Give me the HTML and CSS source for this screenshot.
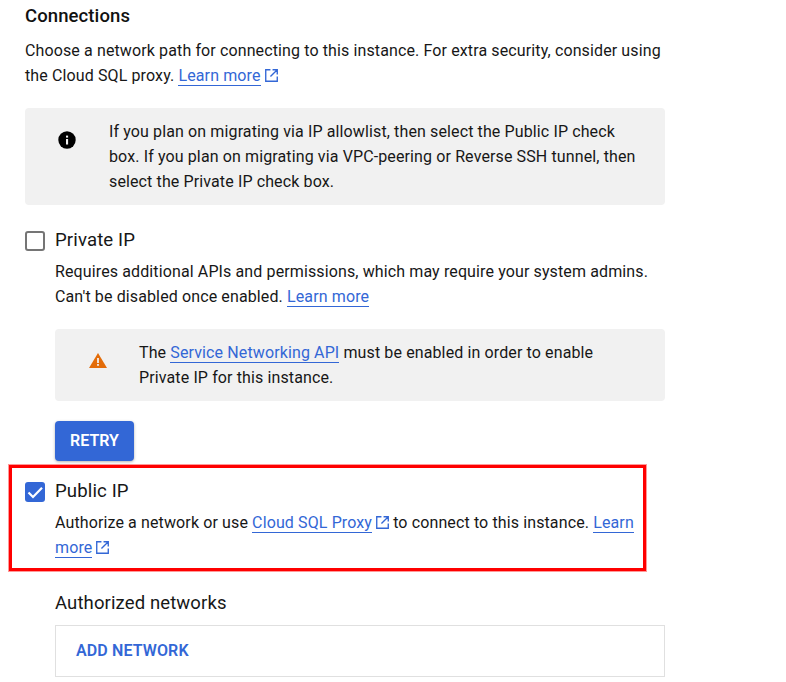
FILE: index.html
```html
<!DOCTYPE html>
<html lang="en">
<head>
    <meta charset="UTF-8">
    <meta name="viewport" content="width=device-width, initial-scale=1.0">
    <title>Connections</title>
    <link rel="stylesheet" href="styles.css">
</head>
<body>
    <div class="container">
        <h2 class="heading">Connections</h2>
        <p class="intro">Choose a network path for connecting to this instance. For extra security, consider using the Cloud SQL proxy. <a href="#" class="link">Learn more</a><svg class="ext-icon" viewBox="0.8 0.8 12.4 12.4"><path d="M6 1.5H1.5v11h11V8M8 1.5h4.5V6M12.5 1.5L6 8" /></svg></p>

        <div class="notice notice-info">
            <div class="notice-icon">
                <svg viewBox="0 0 18 18" width="18" height="18"><circle cx="9" cy="9" r="8.7" fill="#000"/><rect x="8" y="8" width="2.1" height="5.5" fill="#f1f1f1"/><rect x="8" y="4.6" width="2.1" height="2" fill="#f1f1f1"/></svg>
            </div>
            <p>If you plan on migrating via IP allowlist, then select the Public IP check box. If you plan on migrating via VPC-peering or Reverse SSH tunnel, then select the Private IP check box.</p>
        </div>

        <section class="option option-private">
            <div class="option-head">
                <span class="checkbox"></span>
                <span class="option-label">Private IP</span>
            </div>
            <div class="option-body">
                <p>Requires additional APIs and permissions, which may require your system admins. Can't be disabled once enabled. <a href="#" class="link">Learn more</a></p>
                <div class="notice notice-warning">
                    <div class="notice-icon">
                        <svg viewBox="0 0 18 15" width="18" height="15"><path d="M9 0L18 15H0Z" fill="#e36c09"/><rect x="8.1" y="5" width="1.8" height="5" fill="#f1f1f1"/><rect x="8.1" y="11" width="1.8" height="1.8" fill="#f1f1f1"/></svg>
                    </div>
                    <p>The <a href="#" class="link">Service Networking API</a> must be enabled in order to enable Private IP for this instance.</p>
                </div>
                <button class="button">RETRY</button>
            </div>
        </section>

        <section class="option option-public">
            <div class="highlight"></div>
            <div class="option-head">
                <span class="checkbox checked">
                    <svg viewBox="0 0 20 20" width="20" height="20"><path d="M3.5 10.5L8 15L17 5.7" fill="none" stroke="#fff" stroke-width="2.2"/></svg>
                </span>
                <span class="option-label">Public IP</span>
            </div>
            <div class="option-body">
                <p>Authorize a network or use <a href="#" class="link">Cloud SQL Proxy</a><svg class="ext-icon" viewBox="0.8 0.8 12.4 12.4"><path d="M6 1.5H1.5v11h11V8M8 1.5h4.5V6M12.5 1.5L6 8" /></svg> to connect to this instance. <a href="#" class="link">Learn more</a><svg class="ext-icon" viewBox="0.8 0.8 12.4 12.4"><path d="M6 1.5H1.5v11h11V8M8 1.5h4.5V6M12.5 1.5L6 8" /></svg></p>
            </div>
        </section>

        <div class="networks">
            <h3 class="networks-title">Authorized networks</h3>
            <div class="networks-box"><a href="#" class="add-link">ADD NETWORK</a></div>
        </div>
    </div>
</body>
</html>
```

FILE: styles.css
```css
* {
    margin: 0;
    padding: 0;
    box-sizing: border-box;
}

body {
    font-family: Roboto, "Liberation Sans", sans-serif;
    font-size: 16px;
    letter-spacing: 0.12px;
    line-height: 25px;
    color: #171717;
    background: white;
}

.container {
    width: 665px;
    padding: 3px 0 5px 25px;
}

.heading {
    font-size: 18.5px;
    font-weight: 500;
    letter-spacing: 0.1px;
    line-height: 26px;
    color: #111;
    margin-bottom: 9px;
}

.link {
    color: #3367d6;
    text-decoration: none;
    border-bottom: 1px solid #3367d6;
}

.ext-icon {
    width: 13px;
    height: 13px;
    margin-left: 4px;
    vertical-align: -1px;
    fill: none;
    stroke: #3367d6;
    stroke-width: 1.3;
}

.notice {
    display: flex;
    background: #f1f1f1;
    border-radius: 4px;
    padding: 11px 20px 11px 0;
}

.notice-icon {
    width: 84px;
    flex-shrink: 0;
    display: flex;
    justify-content: center;
}

.notice-info {
    margin-top: 20px;
}

.notice-info .notice-icon {
    padding: 12px 0 0 0;
}

.notice-warning {
    margin-top: 20px;
}

.notice-warning .notice-icon {
    padding: 13px 0 0 1px;
}

.option-head {
    display: flex;
    align-items: center;
    gap: 10px;
}

.option-private {
    margin-top: 23px;
}

.option-public {
    position: relative;
    margin-top: 18px;
}

.option-label {
    font-size: 18.6px;
}

.checkbox {
    width: 20px;
    height: 20px;
    border: 2px solid #757575;
    border-radius: 3px;
    flex-shrink: 0;
}

.checkbox.checked {
    border: none;
    background: #3367d6;
    display: flex;
}

.option-body {
    padding-left: 30px;
    margin-top: 6px;
}

.button {
    display: block;
    margin-top: 20px;
    width: 79px;
    height: 40px;
    padding-bottom: 2px;
    background: #3367d6;
    color: white;
    border: none;
    border-radius: 4px;
    font-family: inherit;
    font-size: 16px;
    font-weight: 600;
    box-shadow: 0 1px 3px rgba(0,0,0,0.3);
}

/* red annotation drawn over the section */
.highlight {
    position: absolute;
    left: -16px;
    right: 19px;
    top: -14px;
    bottom: -11px;
    border: 3px solid #f00;
    box-shadow: 0 0 0 1px rgba(255,0,0,0.4);
    pointer-events: none;
}

.networks {
    margin-top: 30px;
    padding-left: 30px;
}

.networks-title {
    font-size: 18.5px;
    font-weight: 400;
    line-height: 26px;
    margin-bottom: 9px;
}

.networks-box {
    height: 52px;
    border: 1px solid #e0e0e0;
    padding: 0 0 2px 20px;
    display: flex;
    align-items: center;
}

.add-link {
    color: #3367d6;
    font-size: 16px;
    font-weight: 600;
    text-decoration: none;
}
```
